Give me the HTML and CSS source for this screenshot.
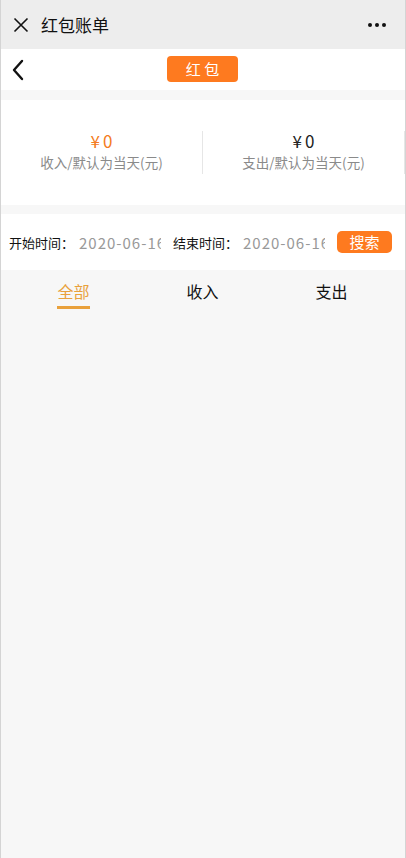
FILE: index.html
```html
<!DOCTYPE html>
<html lang="zh-CN">
<head>
    <meta charset="UTF-8">
    <meta name="viewport" content="width=device-width, initial-scale=1.0">
    <title>红包账单</title>
    <link rel="stylesheet" href="styles.css">
</head>
<body>
    <div class="page">
        <div class="topbar">
            <svg class="close-icon" width="16" height="16" viewBox="0 0 16 16">
                <path d="M1.5 1.5 L14.5 14.5 M14.5 1.5 L1.5 14.5" stroke="#111" stroke-width="1.6" fill="none"/>
            </svg>
            <span class="topbar-title">红包账单</span>
            <span class="more"><i></i><i></i><i></i></span>
        </div>

        <div class="navbar">
            <svg class="back-icon" width="14" height="22" viewBox="0 0 14 22">
                <path d="M11 2 L3 11 L11 20" stroke="#111" stroke-width="2.4" fill="none" stroke-linecap="round" stroke-linejoin="round"/>
            </svg>
            <span class="nav-tag">红 包</span>
        </div>

        <div class="summary">
            <div class="summary-item">
                <div class="amount amount-in"><span class="yen">¥</span>0</div>
                <div class="summary-label">收入/默认为当天(元)</div>
            </div>
            <div class="summary-item">
                <div class="amount"><span class="yen">¥</span>0</div>
                <div class="summary-label">支出/默认为当天(元)</div>
            </div>
        </div>

        <div class="search">
            <span class="search-label">开始时间：</span>
            <span class="search-date">2020-06-16</span>
            <span class="search-label">结束时间：</span>
            <span class="search-date">2020-06-16</span>
            <button class="search-btn" type="button">搜索</button>
        </div>

        <div class="tabs">
            <div class="tab tab-active"><span>全部</span></div>
            <div class="tab"><span>收入</span></div>
            <div class="tab"><span>支出</span></div>
        </div>
    </div>
</body>
</html>
```

FILE: styles.css
```css
html, body {
    margin: 0;
    padding: 0;
    height: 100%;
}
body {
    font-family: "Noto Sans CJK SC", "Noto Sans", sans-serif;
    background-color: #f7f7f7;
}
.page {
    min-height: 100%;
    box-sizing: border-box;
    border-left: 1px solid #d4d4d4;
    border-right: 1px solid #d4d4d4;
    background-color: #f7f7f7;
}

/* top bar */
.topbar {
    height: 49px;
    background-color: #ededed;
    display: flex;
    align-items: center;
    padding: 0 0 0 12px;
}
.close-icon {
    margin-right: 12px;
}
.topbar-title {
    font-size: 17px;
    color: #111;
    flex: 1;
}
.more {
    display: flex;
    gap: 3px;
    margin-right: 19px;
}
.more i {
    display: block;
    width: 4px;
    height: 4px;
    border-radius: 50%;
    background-color: #111;
}

/* nav bar */
.navbar {
    height: 41px;
    background-color: #fff;
    display: flex;
    align-items: center;
    position: relative;
    margin-bottom: 10px;
}
.back-icon {
    margin-left: 10px;
}
.nav-tag {
    position: absolute;
    left: 166px;
    top: 7px;
    width: 71px;
    height: 26px;
    line-height: 26px;
    background-color: #fe7a1f;
    color: #fff;
    border-radius: 4px;
    text-align: center;
    font-size: 15px;
}

/* summary */
.summary {
    height: 105px;
    background-color: #fff;
    display: flex;
    align-items: center;
    margin-bottom: 9px;
}
.summary-item {
    width: 201px;
    border-right: 1px solid #e6e6e6;
    text-align: center;
    padding: 0 0 2px;
}
.amount {
    font-size: 17px;
    line-height: 20px;
    color: #222;
}
.yen {
    margin-right: 3px;
}
.amount-in {
    color: #f47b20;
}
.summary-label {
    font-size: 13.5px;
    line-height: 19px;
    margin-top: 2px;
    color: #8a8a8a;
}

/* search row */
.search {
    height: 56px;
    background-color: #fff;
    display: flex;
    align-items: center;
    padding: 0 0 0 8px;
}
.search-label {
    font-size: 13px;
    color: #111;
    margin-right: 5px;
}
.search-date {
    width: 82px;
    overflow: hidden;
    white-space: nowrap;
    font-size: 15px;
    color: #999;
    margin-right: 12px;
    letter-spacing: 1px;
}
.search-btn {
    margin-left: 0;
    width: 55px;
    height: 22px;
    padding: 0;
    border: none;
    border-radius: 5px;
    background-color: #fe7a1f;
    color: #fff;
    font-family: inherit;
    font-size: 15px;
    line-height: 22px;
}

/* tabs */
.tabs {
    display: flex;
    padding: 0 9px 0 8px;
    height: 44px;
}
.tab {
    flex: 1;
    display: flex;
    justify-content: center;
}
.tab span {
    font-size: 16px;
    color: #111;
    line-height: 20px;
    padding-top: 11px;
    height: 25px;
}
.tab-active span {
    color: #e9a13c;
    border-bottom: 3px solid #e9a13c;
}
```
